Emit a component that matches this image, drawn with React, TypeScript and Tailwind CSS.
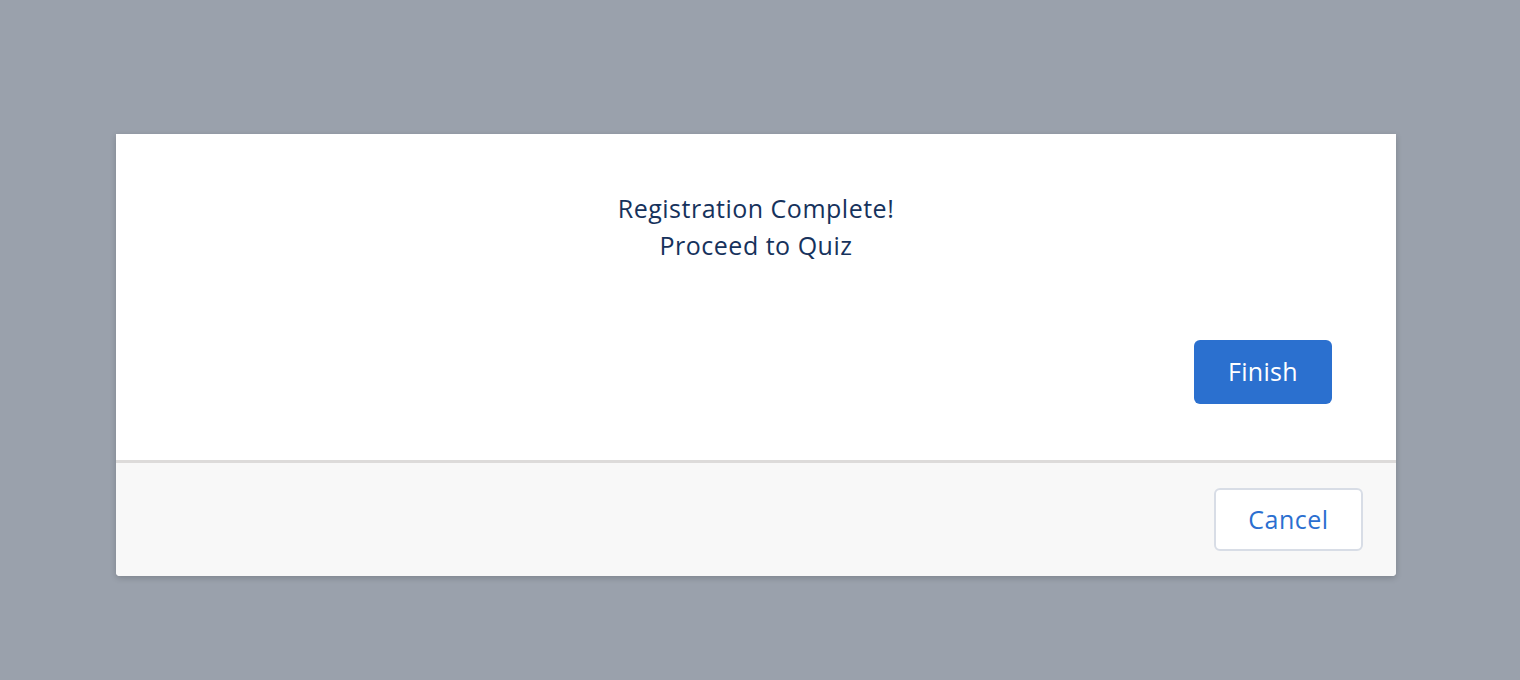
import React from 'react';

const font = { fontFamily: '"Open Sans", "Liberation Sans", sans-serif' };

const App: React.FC = () => {
  return (
    <div className="min-h-[680px] w-full bg-[#9aa1ac] pt-[134px] pl-[116px]" style={font}>
      <div className="w-[1280px] rounded-b-[4px] bg-white shadow-[0_2px_6px_rgba(0,0,0,0.18)]">
        {/* body */}
        <div className="h-[326px] px-16 pt-[56px] flex flex-col">
          <div className="text-center text-[25px] leading-[37px] tracking-[0.5px] text-[#16325c]">
            <p>Registration Complete!</p>
            <p>Proceed to Quiz</p>
          </div>
          <div className="mt-[76px] flex justify-end">
            <button className="h-[64px] w-[138px] rounded-[6px] bg-[#2b70cf] text-[25px] tracking-[0.3px] text-white">
              Finish
            </button>
          </div>
        </div>
        {/* footer */}
        <div className="h-[116px] border-t-[3px] border-[#dddbda] bg-[#f8f8f8] rounded-b-[4px] flex items-center justify-end pr-[33px]">
          <button className="h-[63px] w-[149px] rounded-[6px] border-2 border-[#d8dde6] bg-white text-[25px] tracking-[0.5px] text-[#2b6fd0]">
            Cancel
          </button>
        </div>
      </div>
    </div>
  );
};

export default App;
